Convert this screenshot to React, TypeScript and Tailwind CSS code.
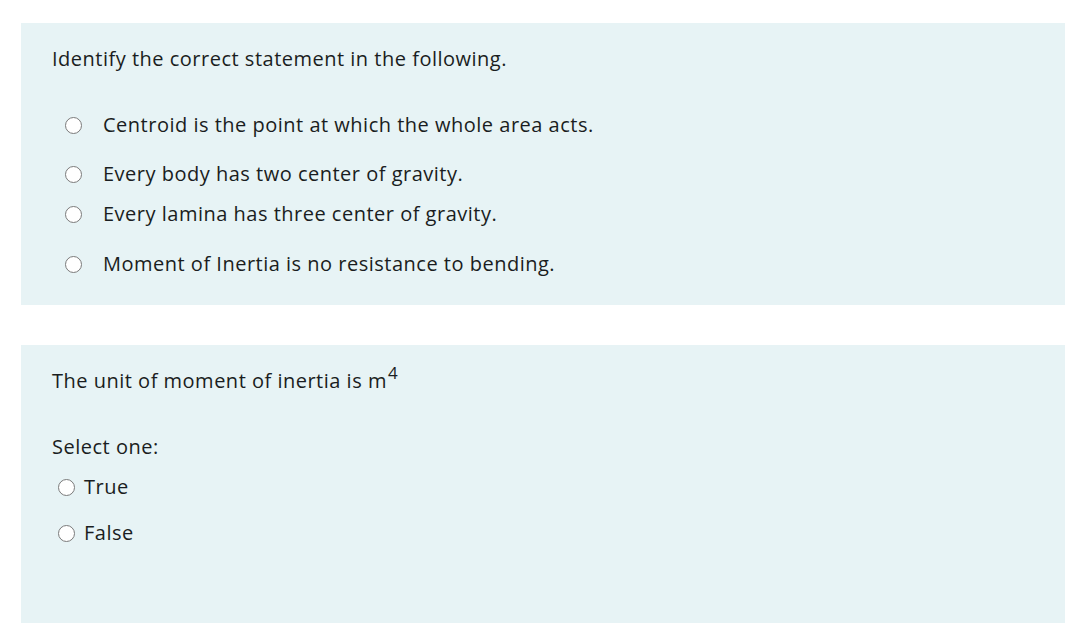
import React from "react";

const font = { fontFamily: '"Open Sans", "Noto Sans", sans-serif' };

function Radio() {
  return <span className="inline-block w-[17px] h-[17px] rounded-full border-[1.5px] border-[#7a7a7a] bg-white shrink-0" />;
}

function Option({ text, mt }: { text: string; mt: string }) {
  return (
    <div className={`flex items-center h-[30px] pl-[13px] ${mt}`}>
      <Radio />
      <span className="ml-[21px]">{text}</span>
    </div>
  );
}

export default function App() {
  return (
    <div
      className="w-[1065px] h-[637px] bg-white pt-[23px] pl-[21px] text-[#1a1d21] text-[20px] tracking-[0.5px] overflow-hidden"
      style={font}
    >
      <div className="bg-[#e7f3f5] h-[282px] pl-[31px] pt-[21px]">
        <div className="h-[30px] flex items-center">Identify the correct statement in the following.</div>
        <Option text="Centroid is the point at which the whole area acts." mt="mt-[36px]" />
        <Option text="Every body has two center of gravity." mt="mt-[19px]" />
        <Option text="Every lamina has three center of gravity." mt="mt-[10px]" />
        <Option text="Moment of Inertia is no resistance to bending." mt="mt-[20px]" />
      </div>
      <div className="bg-[#e7f3f5] h-[278px] mt-[40px] pl-[31px] pt-[21px]">
        <div className="h-[30px] flex items-center">
          <span>
            The unit of moment of inertia is m
            <span className="inline-block text-[17px] leading-none relative top-[-9px] ml-[1px]">4</span>
          </span>
        </div>
        <div className="h-[30px] flex items-center mt-[36px]">Select one:</div>
        <div className="h-[30px] flex items-center mt-[10px] pl-[6px]">
          <Radio />
          <span className="ml-[9px]">True</span>
        </div>
        <div className="h-[30px] flex items-center mt-[16px] pl-[6px]">
          <Radio />
          <span className="ml-[9px]">False</span>
        </div>
      </div>
    </div>
  );
}
